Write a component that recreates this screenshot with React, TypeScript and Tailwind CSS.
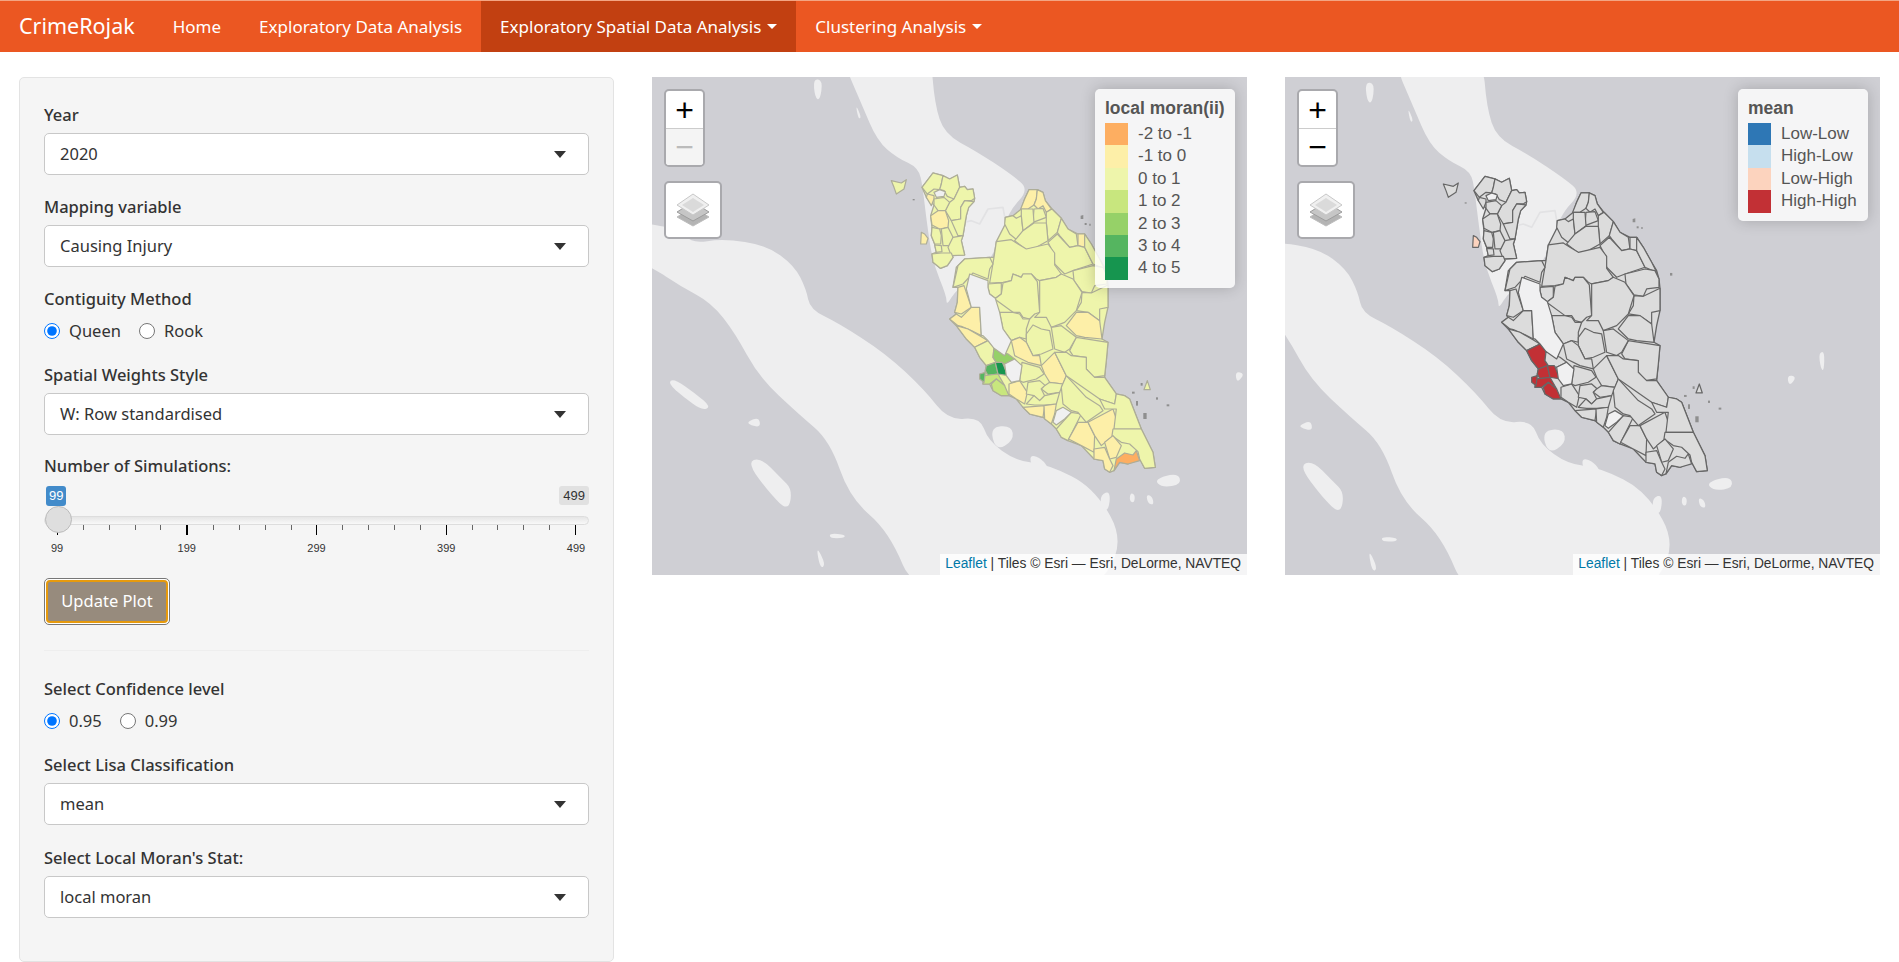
type District = { p: string; a?: string; b?: string }

const PALE = "#fdefa8"
const LIGHT = "#eef5ab"
const GREY = "#dcdcdc"
const RED = "#c23035"
const LAND_FILL = "#f0f0f1"

// land shapes, traced on the left map
const LAND = [
  "505,-20 735,-20 745,130 770,220 850,270 940,340 985,385 930,450 890,600 800,680 775,730 775,700 740,600 725,480 715,380 705,320 650,290 600,240 560,130",
  "-300,400 30,490 100,500 130,545 210,530 320,550 390,610 420,680 430,740 500,780 620,870 720,980 780,1070 860,1060 880,1130 950,1190 1030,1200 1150,1270 1230,1440 1130,1600 700,1600 630,1400 530,1300 480,1130 400,1050 300,940 240,810 180,720 100,670 30,615 -300,420",
  "885,1090 940,1085 945,1130 900,1160",
  "975,1165 1030,1190 1050,1290 1020,1280",
  "1060,1245 1130,1260 1135,1300 1090,1310",
  "1300,1245 1360,1225 1370,1260 1320,1270",
  "1165,1290 1190,1280 1185,1340 1165,1330",
  "1240,1285 1252,1290 1250,1315 1238,1310",
  "1280,1290 1295,1295 1300,1320 1285,1318",
  "70,960 85,945 140,990 180,1030 155,1040 110,1000",
  "270,1195 305,1180 355,1240 385,1275 375,1340 330,1290",
  "270,1075 300,1060 305,1090 280,1085",
  "480,1405 520,1410 515,1420 480,1420",
  "445,1440 470,1500 455,1510",
  "1505,925 1530,930 1510,960",
  "1585,860 1600,855 1598,915 1590,905",
  "438,55 462,60 455,120 442,110",
  "545,130 560,170 552,175",
]

// outer edge of the states, filled first so no gaps show between districts
const OUTLINES = [
  "42,65 75,22 105,30 125,40 148,28 155,65 170,62 178,72 195,70 200,98 198,108 182,125 175,150 165,210 160,225 170,268 130,270 135,275 118,300 97,308 75,290 72,265 85,260 80,235 70,210 72,185 68,150 78,118 55,95",
  "363,72 388,72 405,80 412,105 432,130 460,158 480,190 510,205 530,205 550,235 575,280 590,305 597,330 600,358 600,425 590,470 582,520 600,530 595,585 590,635 625,685 650,690 665,700 700,790 735,860 742,905 710,908 695,880 660,895 635,890 618,915 605,920 590,910 585,885 558,880 520,840 480,825 460,815 445,790 430,775 405,755 365,745 345,725 325,700 303,690 280,690 255,675 245,655 225,655 230,625 235,600 215,575 200,545 175,520 145,480 125,460 145,445 140,440 148,410 150,365 135,365 145,305 170,280 245,275 258,275 265,228 292,175 292,155 315,150 340,130 350,100",
]

const HOLES = [
  "175,370 185,325 240,345 240,365 245,385 262,398 275,440 285,490 310,525 290,570 258,548 240,525 225,510 220,510 215,425 190,425",
  "290,595 320,580 342,600 335,645 310,650 295,630",
  "435,770 445,735 465,725 490,740 470,760 445,778",
  "78,80 95,72 112,78 108,92 85,95",
]

const DISTRICTS: District[] = [
  { p: "-50,45 -20,52 -5,42 -12,70 -35,85 -42,65" },
  { p: "40,200 50,205 60,218 55,235 38,235", a: PALE, b: "#fcd3be" },
  { p: "42,65 75,22 105,30 100,55 95,72 78,70 58,85" },
  { p: "105,30 125,40 148,28 155,65 138,100 118,92 108,75 95,72 100,55" },
  { p: "155,65 170,62 178,72 195,70 200,98 190,105 170,105 158,125 158,160 130,165 112,135 125,110 138,100" },
  { p: "58,85 78,90 78,100 70,120 55,95", a: PALE },
  { p: "78,100 108,95 125,110 112,135 90,135 78,118" },
  { p: "158,125 170,105 198,108 182,125 175,150 165,210 150,210 130,165 158,160" },
  { p: "90,135 112,135 122,165 120,185 95,190 72,178 68,150", a: PALE },
  { p: "72,185 95,190 100,210 98,235 80,235 70,210" },
  { p: "100,190 120,185 135,215 128,240 105,240" },
  { p: "135,215 165,210 160,225 170,268 130,270 120,245" },
  { p: "80,238 100,240 102,258 85,260" },
  { p: "72,265 100,262 130,262 135,275 118,300 97,308 75,290" },
  { p: "363,72 388,72 385,100 378,118 360,130 338,130 350,100", a: PALE },
  { p: "388,72 405,80 412,105 430,130 415,140 405,120 390,130 378,118 385,100", a: PALE },
  { p: "378,130 405,128 415,155 375,170" },
  { p: "415,140 432,130 460,158 448,200 420,225 415,170" },
  { p: "292,155 315,150 325,158 340,150 345,195 330,225 305,205 290,175" },
  { p: "340,130 375,130 378,170 345,195 340,150" },
  { p: "345,195 378,172 415,172 420,225 385,245 355,252 320,225" },
  { p: "460,158 480,190 505,205 510,240 485,245 455,210 448,200" },
  { p: "510,205 530,205 550,240 530,245 510,240", a: PALE },
  { p: "420,230 448,205 485,245 510,240 530,245 555,295 495,315 470,325 440,295 435,260" },
  { p: "530,205 550,235 575,280 590,310 555,295 530,245" },
  { p: "495,315 555,300 585,305 597,330 597,355 560,360 550,382 522,378 498,345" },
  { p: "522,380 550,382 600,358 600,425 575,430 575,465 540,440 505,435 520,410" },
  { p: "265,228 310,222 330,235 355,250 420,235 440,262 440,298 460,325 445,335 395,345 385,340 370,325 345,325 340,335 315,325 310,345 285,350 245,352 258,275" },
  { p: "240,355 280,352 280,385 262,398 245,385 240,365" },
  { p: "285,352 310,345 315,325 340,335 345,325 370,325 388,348 395,440 380,445 365,460 345,455 335,440 315,440 260,400 280,385" },
  { p: "395,345 445,335 460,325 495,340 522,380 505,435 470,470 430,485 415,455 380,455 395,440" },
  { p: "475,480 505,440 540,440 575,465 582,520 530,515 505,510", a: PALE },
  { p: "505,515 600,530 595,585 590,630 555,635 535,610 535,575 495,570 485,555" },
  { p: "275,440 315,440 335,445 345,460 365,460 355,490 355,520 335,515 310,525 285,490" },
  { p: "355,505 375,478 400,490 425,495 435,550 400,565 375,570 355,530" },
  { p: "430,485 460,480 505,515 485,550 470,560 440,550" },
  { p: "150,300 170,280 245,275 255,295 245,310 240,340 195,322 165,355 135,365" },
  { p: "150,365 168,360 190,425 160,445 140,440 148,410", a: PALE },
  { p: "125,460 145,445 160,455 190,425 215,425 220,510 190,495 160,482 150,480", a: PALE },
  { p: "145,480 180,490 215,510 240,525 200,545 175,520", a: PALE },
  { p: "200,545 240,525 258,545 255,575 265,590 235,600 215,575", b: RED },
  { p: "258,548 300,565 320,580 290,595 265,590 255,575", a: "#96d168" },
  { p: "235,600 262,590 270,625 240,630 232,615", a: "#55b560", b: RED },
  { p: "262,590 283,590 300,630 270,625", a: "#16954f", b: RED },
  { p: "228,630 270,625 290,660 265,640 245,655 225,655", a: "#c8e67e", b: RED },
  { p: "250,655 265,640 290,660 303,690 280,690 255,675", a: "#c8e67e", b: RED },
  { p: "215,625 232,620 228,650 215,640", a: "#55b560", b: RED },
  { p: "310,525 335,515 355,530 375,570 395,570 400,600 360,590 320,570", a: PALE },
  { p: "303,655 335,645 358,680 350,715 325,700 303,685", a: PALE },
  { p: "342,590 395,605 408,625 385,640 345,650 335,645" },
  { p: "355,685 360,650 395,645 412,660 400,670 410,690 395,705 378,690" },
  { p: "400,600 440,560 475,630 465,655 425,650 410,625", a: PALE },
  { p: "410,660 425,650 465,655 455,680 420,685 400,670" },
  { p: "355,715 378,690 395,705 410,690 455,680 445,715 410,718 380,718" },
  { p: "345,725 410,720 405,755 365,745", a: PALE },
  { p: "408,720 445,715 440,745 430,775 410,760", a: PALE },
  { p: "445,790 490,740 520,745 505,775 480,825 460,815" },
  { p: "482,820 510,770 540,770 560,810 558,860 520,840", a: PALE },
  { p: "540,770 615,730 625,760 615,810 580,840 560,810", a: PALE },
  { p: "460,665 475,630 535,695 575,720 585,735 535,770 510,740 490,735 465,715" },
  { p: "475,560 490,570 535,575 535,610 560,635 590,635 625,685 620,715 575,700 475,630 440,560" },
  { p: "575,700 620,715 625,685 650,690 665,700 700,790 618,790 625,730 590,730" },
  { p: "615,790 700,790 735,860 742,905 710,908 695,880 690,858 665,835 640,830 612,810" },
  { p: "590,830 615,810 640,840 625,875 605,880", a: PALE },
  { p: "558,850 590,845 605,880 615,900 605,920 590,910 585,885 558,880", a: PALE },
  { p: "625,880 650,862 675,868 685,855 695,885 660,895 635,890 618,915", a: "#fdae61" },
  { p: "708,672 718,645 727,672" },
]

const SPECKS = [
  "518,150 526,148 526,160 518,160",
  "530,172 536,172 536,178 530,178",
  "544,174 548,174 548,180 544,180",
  "630,312 637,312 637,320 630,320",
  "14,100 20,100 20,104 14,104",
  "672,678 680,678 680,684 672,684",
  "744,695 750,695 750,702 744,702",
  "776,716 784,716 784,722 776,722",
  "706,742 716,742 716,760 706,760",
  "684,706 690,706 690,720 684,720",
  "698,652 704,652 704,660 698,660",
]

// rounds the corners of a traced coastline
function smooth(points: string) {
  const pts = points.split(" ").map((p) => p.split(",").map(Number))
  const mid = (a: number[], b: number[]) => `${(a[0] + b[0]) / 2} ${(a[1] + b[1]) / 2}`
  let d = `M${mid(pts[pts.length - 1], pts[0])}`
  pts.forEach((p, i) => {
    d += ` Q${p[0]} ${p[1]} ${mid(p, pts[(i + 1) % pts.length])}`
  })
  return d + "Z"
}

function MapArt({ second }: { second?: boolean }) {
  const stroke = second ? "#666666" : "#adad98"
  const base = second ? GREY : LIGHT
  return (
    <svg viewBox={second ? "81 -3.3 595 498" : "0 0 595 498"} className="block h-full w-full">
      <rect x="-100" y="-100" width="900" height="800" fill="#cfcfd4" />
      <g transform="scale(0.3953 0.3367) translate(-30 -50)" fill="#eeeeef">
        {LAND.map((pts) => (
          <path key={pts} d={smooth(pts)} />
        ))}
      </g>
      <g transform="translate(256 88.67) scale(0.3333)" strokeLinejoin="round">
        <polyline points="150,175 190,165 215,175 240,130 285,125 300,210" fill="none" stroke="#e2e2e4" strokeWidth="5" />
        {OUTLINES.map((pts) => (
          <polygon key={pts} points={pts} fill={base} stroke={stroke} strokeWidth="4" />
        ))}
        {DISTRICTS.map((d) => (
          <polygon key={d.p} points={d.p} fill={second ? d.b ?? GREY : d.a ?? LIGHT} stroke={stroke} strokeWidth="3.6" />
        ))}
        {HOLES.map((pts) => (
          <polygon key={pts} points={pts} fill={LAND_FILL} stroke={stroke} strokeWidth="3.6" />
        ))}
        {SPECKS.map((pts) => (
          <polygon key={pts} points={pts} fill="#8f8f8f" />
        ))}
      </g>
    </svg>
  )
}

function LayersIcon() {
  return (
    <svg width="34" height="34" viewBox="0 0 34 34">
      <path d="M17 14 L33 24 L17 33 L1 24 Z" fill="#b4b4b4" stroke="#bdbdbd" />
      <path d="M17 9 L33 19 L17 28 L1 19 Z" fill="#c6c6c6" stroke="#9d9d9d" />
      <path d="M17 1 L33 12 L17 22 L1 12 Z" fill="#f0f0f0" stroke="#c8c8c8" />
      <path d="M17 5 L28 12 L17 19 L6 12 Z" fill="#dadada" />
    </svg>
  )
}

function LeafletMap({
  second,
  title,
  items,
  legendClass,
}: {
  second?: boolean
  title: string
  items: [string, string][]
  legendClass: string
}) {
  return (
    <div className="relative h-[498px] overflow-hidden bg-[#cfcfd4] font-['Liberation_Sans',sans-serif]">
      <MapArt second={second} />
      <div className="absolute left-[12px] top-[12px] flex h-[78px] w-[41px] flex-col overflow-hidden rounded-[5px] border-2 border-[#a9a9ad] bg-white">
        <div className="flex h-[38px] items-center justify-center border-b border-[#ccc] text-[32px] leading-none text-black">+</div>
        <div className={second ? "flex flex-1 items-center justify-center text-[32px] leading-none text-black" : "flex flex-1 items-center justify-center bg-[#f4f4f4] text-[32px] leading-none text-[#bbb]"}>
          −
        </div>
      </div>
      <div className="absolute left-[12px] top-[104px] flex h-[58px] w-[58px] items-center justify-center rounded-[5px] border-2 border-[#a9a9ad] bg-white">
        <LayersIcon />
      </div>
      <div className={`absolute right-[12px] top-[12px] rounded-[5px] bg-white/80 px-[10px] py-[8px] text-[17px] leading-[22.4px] text-[#555] shadow-[0_0_15px_rgba(0,0,0,0.2)] ${legendClass}`}>
        <div className="mb-[4px] whitespace-nowrap text-[17.5px] font-bold leading-[22px]">{title}</div>
        {items.map(([label, color]) => (
          <div key={label} className="flex h-[22.4px] items-center">
            <span className="mr-[10px] h-full w-[23px]" style={{ backgroundColor: color }} />
            {label}
          </div>
        ))}
      </div>
      <div className="absolute bottom-0 right-0 flex h-[21px] w-[307px] items-center justify-end whitespace-nowrap bg-white/80 pr-[6px] text-[13.8px] text-[#333]">
        <span className="text-[#0078a8]">Leaflet</span>
        <span>&nbsp;| Tiles © Esri — Esri, DeLorme, NAVTEQ</span>
      </div>
    </div>
  )
}

function Field({ label, value, className }: { label: string; value: string; className: string }) {
  return (
    <div className={className}>
      <div className="mb-[6px] pt-px text-[16.5px] font-medium leading-[24px] text-[#333]">{label}</div>
      <div className="flex h-[42px] items-center justify-between rounded-[5px] border border-[#c8c8c8] bg-white pl-[15px] pr-[22px] text-[16.5px] text-[#333]">
        <span>{value}</span>
        <span className="h-0 w-0 border-x-[6px] border-t-[7px] border-x-transparent border-t-[#333]" />
      </div>
    </div>
  )
}

function Radio({ label, checked }: { label: string; checked?: boolean }) {
  return (
    <label className="mr-[18px] flex items-center gap-[9px] text-[16.5px] text-[#333]">
      <input type="radio" checked={!!checked} readOnly className="m-0 h-[16px] w-[16px]" />
      {label}
    </label>
  )
}

function Slider() {
  const ticks = Array.from({ length: 21 }, (_, i) => i)
  return (
    <div className="mt-[8px] h-[92px] font-['Liberation_Sans',sans-serif]">
      <div className="flex h-[20px] items-start justify-between text-[13px] leading-[20px]">
        <span className="ml-[2px] h-[20px] rounded-[3px] bg-[#428bca] px-[3px] text-white">99</span>
        <span className="h-[19px] rounded-[3px] bg-[#e1e1e1] px-[4px] leading-[19px] text-[#333]">499</span>
      </div>
      <div className="relative mt-[10px] h-[9px] rounded-full border border-[#ddd] bg-gradient-to-b from-[#e6e6e6] to-[#f8f8f8]">
        <div className="absolute left-0 top-[-11px] h-[27px] w-[27px] rounded-full border border-[#bbb] bg-[#dedede]" />
      </div>
      <div className="flex items-start justify-between pl-[13px] pr-[13px]">
        {ticks.map((i) => (
          <span key={i} className={i % 5 === 0 ? (i === 5 ? "h-[10px] w-[2px] bg-black" : "h-[10px] w-px bg-black") : "h-[5px] w-px bg-[#666]"} />
        ))}
      </div>
      <div className="mt-[6px] flex justify-between pl-[13px] pr-[13px] text-[11px] leading-[14px] text-[#333]">
        {["99", "199", "299", "399", "499"].map((t) => (
          <span key={t} className="flex w-0 justify-center">{t}</span>
        ))}
      </div>
    </div>
  )
}

const NAV = "flex h-full items-center px-[19px] text-[17px] text-white"

export default function App() {
  return (
    <div className="h-[962px] overflow-hidden bg-white font-['Noto_Sans',sans-serif]">
      <nav className="flex h-[52px] items-center border-t border-[#f3a583] bg-[#eb5722] pl-[19px]">
        <span className="mr-[19px] text-[21.5px] text-white">CrimeRojak</span>
        <span className={NAV}>Home</span>
        <span className={NAV}>Exploratory Data Analysis</span>
        <span className={`${NAV} gap-[6px] bg-[#c24011]`}>
          Exploratory Spatial Data Analysis
          <span className="h-0 w-0 border-x-[5px] border-t-[5px] border-x-transparent border-t-white" />
        </span>
        <span className={`${NAV} gap-[6px]`}>
          Clustering Analysis
          <span className="h-0 w-0 border-x-[5px] border-t-[5px] border-x-transparent border-t-white" />
        </span>
      </nav>
      <div className="flex gap-[38px] pl-[19px] pt-[25px]">
        <aside className="h-[885px] w-[595px] shrink-0 rounded-[5px] border border-[#e3e3e3] bg-[#f5f5f5] px-[24px] pt-[24px]">
          <Field label="Year" value="2020" className="mb-[19px]" />
          <Field label="Mapping variable" value="Causing Injury" className="mb-[19px]" />
          <div className="pt-px text-[16.5px] font-medium leading-[24px] text-[#333]">Contiguity Method</div>
          <div className="mb-[19px] mt-[8px] flex h-[24px] items-center">
            <Radio label="Queen" checked />
            <Radio label="Rook" />
          </div>
          <Field label="Spatial Weights Style" value="W: Row standardised" className="mb-[19px]" />
          <div className="text-[16.5px] font-medium leading-[24px] text-[#333]">Number of Simulations:</div>
          <Slider />
          <button className="block h-[47px] w-[126px] rounded-[5px] border border-[#777] bg-white p-px text-[16.5px] text-white">
            <span className="flex h-full items-center justify-center rounded-[4px] border-2 border-[#e69a0d] bg-[#978b7d]">Update Plot</span>
          </button>
          <div className="mb-[25px] mt-[25px] h-px bg-[#eeeeee]" />
          <div className="pt-px text-[16.5px] font-medium leading-[24px] text-[#333]">Select Confidence level</div>
          <div className="mb-[19px] mt-[8px] flex h-[24px] items-center">
            <Radio label="0.95" checked />
            <Radio label="0.99" />
          </div>
          <Field label="Select Lisa Classification" value="mean" className="mb-[20px]" />
          <Field label="Select Local Moran's Stat:" value="local moran" className="" />
        </aside>
        <div className="w-[595px] shrink-0">
          <LeafletMap
            title="local moran(ii)"
            legendClass="w-[140px]"
            items={[
              ["-2 to -1", "#fdae61"],
              ["-1 to 0", "#fdefa8"],
              ["0 to 1", "#eef5ab"],
              ["1 to 2", "#c8e67e"],
              ["2 to 3", "#96d168"],
              ["3 to 4", "#55b560"],
              ["4 to 5", "#16954f"],
            ]}
          />
        </div>
        <div className="w-[595px] shrink-0">
          <LeafletMap
            second
            title="mean"
            legendClass="w-[130px]"
            items={[
              ["Low-Low", "#2e77b5"],
              ["High-Low", "#c6dfee"],
              ["Low-High", "#fcd3be"],
              ["High-High", "#c23035"],
            ]}
          />
        </div>
      </div>
    </div>
  )
}
